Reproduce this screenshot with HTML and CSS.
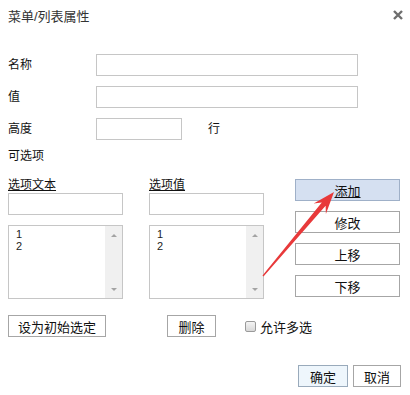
FILE: index.html
```html
<!DOCTYPE html>
<html lang="zh-CN">
<head>
    <meta charset="UTF-8">
    <title>菜单/列表属性</title>
    <link rel="stylesheet" href="styles.css">
</head>
<body>
    <div class="dialog">
        <div class="titlebar">
            <span class="title">菜单/列表属性</span>
            <svg class="close" width="10" height="10" viewBox="0 0 10 10">
                <path d="M1 1 L9 9 M9 1 L1 9" stroke="#6e6e6e" stroke-width="2.4"/>
            </svg>
        </div>

        <div class="fields">
            <div class="field">
                <label>名称</label>
                <input type="text" class="text wide">
            </div>
            <div class="field">
                <label>值</label>
                <input type="text" class="text wide">
            </div>
            <div class="field">
                <label>高度</label>
                <input type="text" class="text short">
                <span class="unit">行</span>
            </div>
        </div>

        <div class="section-title">可选项</div>

        <div class="options">
            <div class="col">
                <div class="col-label">选项文本</div>
                <input type="text" class="text">
                <div class="listbox">
                    <div class="items">
                        <div>1</div>
                        <div>2</div>
                    </div>
                    <div class="scrollbar">
                        <span class="up"></span>
                        <span class="down"></span>
                    </div>
                </div>
            </div>
            <div class="col">
                <div class="col-label">选项值</div>
                <input type="text" class="text">
                <div class="listbox">
                    <div class="items">
                        <div>1</div>
                        <div>2</div>
                    </div>
                    <div class="scrollbar">
                        <span class="up"></span>
                        <span class="down"></span>
                    </div>
                </div>
            </div>
            <div class="actions">
                <button class="btn active"><u>添加</u></button>
                <button class="btn">修改</button>
                <button class="btn">上移</button>
                <button class="btn">下移</button>
            </div>
        </div>

        <div class="bottom-row">
            <button class="btn initial">设为初始选定</button>
            <button class="btn remove">删除</button>
            <label class="check"><span class="box"></span>允许多选</label>
        </div>

        <div class="footer">
            <button class="btn ok">确定</button>
            <button class="btn cancel">取消</button>
        </div>

        <!-- annotation arrow drawn over the dialog -->
        <svg class="arrow" width="410" height="395" viewBox="0 0 410 395">
            <polygon fill="#e8393a" points="334,192 325.9,214 325.6,205.8 263.5,276.5 262.5,275.5 321.8,202.6 313.7,203.6"/>
        </svg>
    </div>
</body>
</html>
```

FILE: styles.css
```css
body {
    margin: 0;
    background: #fff;
    font-family: "Liberation Sans", "Noto Sans CJK SC", sans-serif;
    font-size: 12px;
    color: #111;
}
.dialog {
    position: relative;
    width: 410px;
    height: 395px;
}
.titlebar {
    height: 30px;
    padding: 0 7px 0 8px;
    display: flex;
    justify-content: space-between;
    align-items: center;
}
.title {
    font-size: 13px;
    color: #333;
}
.fields {
    padding: 24px 0 0 8px;
    display: flex;
    flex-direction: column;
    gap: 10px;
}
.field {
    display: flex;
    align-items: center;
    height: 22px;
}
.field label {
    width: 88px;
    margin-top: -4px;
}
.field .unit {
    margin-top: -4px;
}
.text {
    box-sizing: border-box;
    height: 22px;
    margin: 0;
    padding: 0 3px;
    border: 1px solid #c6c6c6;
    background: #fff;
    outline: none;
}
.wide {
    width: 262px;
}
.short {
    width: 86px;
}
.unit {
    margin-left: 26px;
}
.section-title {
    margin: 6px 0 0 8px;
    line-height: 20px;
}
.options {
    display: flex;
    margin: 13px 0 0 8px;
}
.col {
    width: 115px;
    display: flex;
    flex-direction: column;
}
.col + .col {
    margin-left: 26px;
}
.col .text {
    width: 115px;
}
.col-label {
    height: 14px;
    line-height: 13px;
    text-decoration: underline;
}
.listbox {
    box-sizing: border-box;
    margin-top: 10px;
    height: 74px;
    border: 1px solid #c6c6c6;
    display: flex;
}
.items {
    flex: 1;
    padding: 2px 0 0 7px;
    font-size: 11px;
    line-height: 12px;
    font-family: "Liberation Sans", sans-serif;
    color: #222;
}
.scrollbar {
    width: 17px;
    background: #f0f0f0;
    display: flex;
    flex-direction: column;
    justify-content: space-between;
    align-items: center;
    padding: 8px 0 7px;
}
.up, .down {
    width: 0;
    height: 0;
    border-left: 3px solid transparent;
    border-right: 3px solid transparent;
}
.up {
    border-bottom: 3px solid #a3a3a3;
}
.down {
    border-top: 3px solid #a3a3a3;
}
.actions {
    margin-left: 31px;
    display: flex;
    flex-direction: column;
    gap: 10px;
}
.btn {
    box-sizing: border-box;
    height: 22px;
    width: 105px;
    margin: 0;
    padding: 0;
    border: 1px solid #a6a6a6;
    background: #fff;
    font-family: "Noto Sans CJK SC", sans-serif;
    font-size: 13px;
    color: #111;
    cursor: pointer;
}
.btn.active {
    background: #d5e0f1;
    border-color: #9fb0c8;
}
.bottom-row {
    display: flex;
    align-items: center;
    margin: 16px 0 0 8px;
    height: 22px;
}
.initial {
    width: 98px;
}
.remove {
    width: 49px;
    margin-left: 61px;
}
.check {
    display: flex;
    align-items: center;
    margin-left: 29px;
    gap: 4px;
    font-size: 13px;
}
.box {
    width: 9px;
    height: 9px;
    border: 1px solid #9a9a9a;
    border-radius: 2px;
    background: linear-gradient(#f4f4f4, #d8d8d8);
}
.footer {
    display: flex;
    justify-content: flex-end;
    gap: 5px;
    margin-top: 28px;
    padding-right: 9px;
}
.ok {
    width: 50px;
    background: #eef6fc;
    border-color: #9ab;
}
.cancel {
    width: 48px;
}
.arrow {
    position: absolute;
    left: 0;
    top: 0;
    pointer-events: none;
}
```
